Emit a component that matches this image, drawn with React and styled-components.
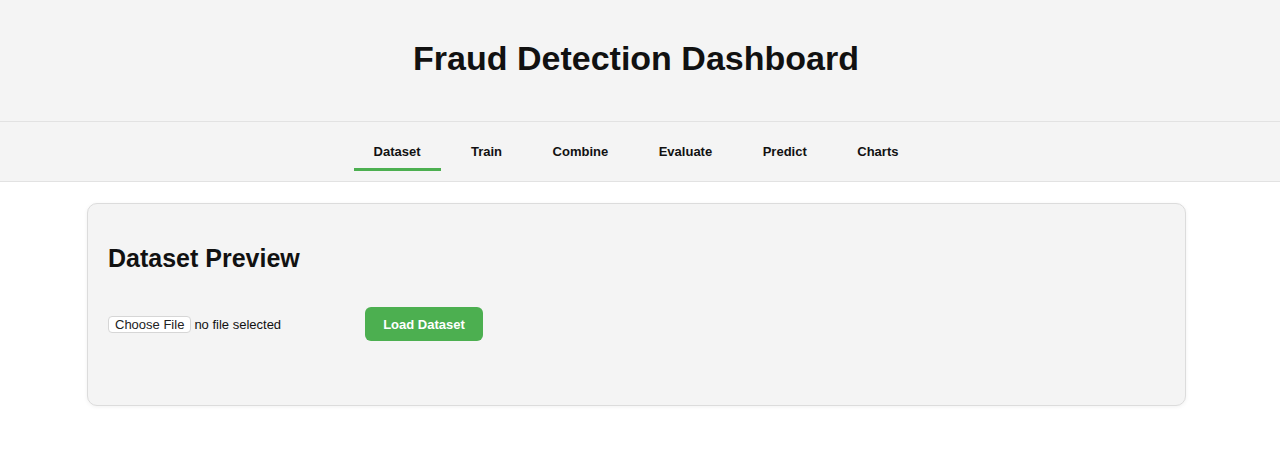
import React from "react";
import styled, { createGlobalStyle } from "styled-components";

const GlobalStyle = createGlobalStyle`
  html, body {
    margin: 0;
    padding: 0;
    background: #ffffff;
    font-family: "Liberation Sans", Arial, Helvetica, sans-serif;
    color: #111111;
  }
  * { box-sizing: border-box; }
`;

const Header = styled.header`
  background: #f4f4f4;
  border-bottom: 1px solid #e2e2e2;
  padding: 37px 8px 42px 0;
  text-align: center;
`;

const Title = styled.h1`
  margin: 0;
  font-size: 34px;
  font-weight: 700;
  line-height: 42px;
  color: #111111;
`;

const Nav = styled.nav`
  background: #f4f4f4;
  border-bottom: 1px solid #e2e2e2;
  display: flex;
  justify-content: center;
  gap: 10.5px;
  padding: 12px 8px 10px 0;
`;

const Tab = styled.button`
  appearance: none;
  background: none;
  border: none;
  border-bottom: 3px solid ${(p) => (p.$active ? "#4caf50" : "transparent")};
  padding: 10px 20px 9px;
  font-family: inherit;
  font-size: 13px;
  font-weight: 700;
  line-height: 15px;
  color: #111111;
  cursor: pointer;
`;

const Main = styled.main`
  padding: 21px 94px 40px 87px;
`;

const Card = styled.section`
  background: #f4f4f4;
  border: 1px solid #dcdcdc;
  border-radius: 10px;
  box-shadow: 0 1px 4px rgba(0, 0, 0, 0.06);
  padding: 20px 20px 64px;
`;

const CardTitle = styled.h2`
  margin: 20px 0 34px;
  font-size: 25px;
  font-weight: 700;
  line-height: 29px;
  color: #111111;
`;

const Row = styled.div`
  display: flex;
  align-items: center;
  height: 34px;
`;

const FilePicker = styled.label`
  display: flex;
  align-items: center;
  gap: 3px;
  width: 247px;
  margin-right: 10px;
  cursor: pointer;
`;

const HiddenInput = styled.input`
  display: none;
`;

const ChooseButton = styled.span`
  display: inline-flex;
  align-items: center;
  height: 17px;
  padding: 0 6px;
  background: #ffffff;
  border: 1px solid #d6d6d6;
  border-radius: 4px;
  font-size: 13px;
  color: #222222;
  white-space: nowrap;
`;

const FileName = styled.span`
  font-size: 13px;
  color: #111111;
  white-space: nowrap;
`;

const PrimaryButton = styled.button`
  appearance: none;
  border: none;
  background: #4caf50;
  color: #ffffff;
  font-family: inherit;
  font-size: 13px;
  font-weight: 700;
  height: 34px;
  width: 118px;
  border-radius: 6px;
  cursor: pointer;
`;

const tabs = ["Dataset", "Train", "Combine", "Evaluate", "Predict", "Charts"];

export default function App() {
  const [active, setActive] = React.useState("Dataset");
  return (
    <>
      <GlobalStyle />
      <Header>
        <Title>Fraud Detection Dashboard</Title>
      </Header>
      <Nav>
        {tabs.map((t) => (
          <Tab key={t} $active={active === t} onClick={() => setActive(t)}>
            {t}
          </Tab>
        ))}
      </Nav>
      <Main>
        <Card>
          <CardTitle>Dataset Preview</CardTitle>
          <Row>
            <FilePicker>
              <HiddenInput type="file" />
              <ChooseButton>Choose File</ChooseButton>
              <FileName>no file selected</FileName>
            </FilePicker>
            <PrimaryButton>Load Dataset</PrimaryButton>
          </Row>
        </Card>
      </Main>
    </>
  );
}
